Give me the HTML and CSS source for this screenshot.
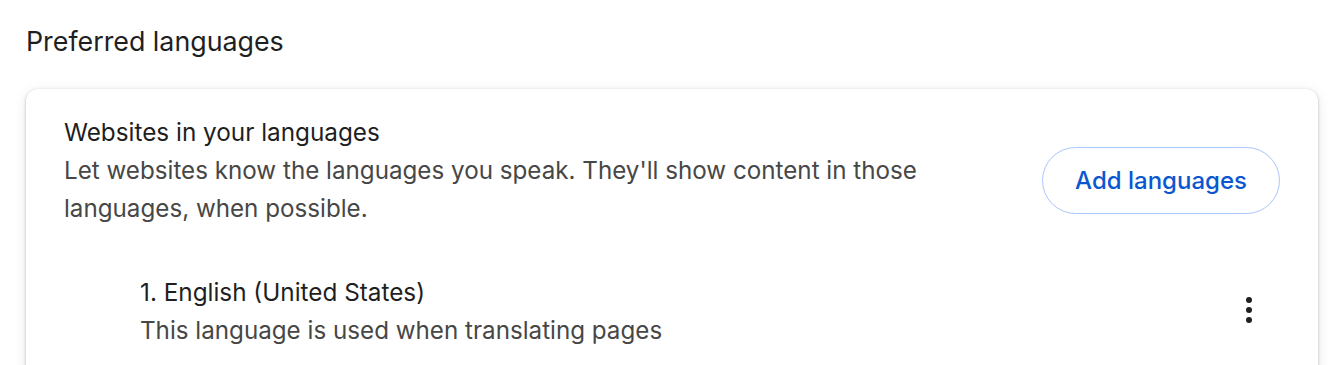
FILE: index.html
```html
<!DOCTYPE html>
<html lang="en">
<head>
    <meta charset="UTF-8">
    <title>Languages</title>
    <link rel="stylesheet" href="styles.css">
</head>
<body>
    <h2 class="section-title">Preferred languages</h2>

    <div class="card">
        <div class="row">
            <div class="row-text">
                <div class="row-label">Websites in your languages</div>
                <div class="row-sub">Let websites know the languages you speak. They'll show content in those languages, when possible.</div>
            </div>
            <button class="add-btn">Add languages</button>
        </div>

        <!-- Sprachliste -->
        <div class="lang-item">
            <div class="lang-text">
                <div class="lang-name">1. English (United States)</div>
                <div class="row-sub">This language is used when translating pages</div>
            </div>
            <button class="more-btn" aria-label="More actions">
                <svg width="24" height="26" viewBox="0 0 24 26">
                    <circle cx="12" cy="3" r="3"/>
                    <circle cx="12" cy="13" r="3"/>
                    <circle cx="12" cy="23" r="3"/>
                </svg>
            </button>
        </div>
    </div>
</body>
</html>
```

FILE: styles.css
```css
body {
    margin: 0;
    padding: 0 26px;
    background-color: #fff;
    font-family: Inter, "Noto Sans", sans-serif;
    color: #1f1f1f;
}
.section-title {
    margin: 0;
    padding-top: 22px;
    height: 89px;
    box-sizing: border-box;
    font-size: 26.8px;
    font-weight: 400;
    line-height: 38px;
}
.card {
    background-color: #fff;
    border-radius: 12px;
    box-shadow: 0 1px 3px rgba(0, 0, 0, 0.24), 0 2px 12px rgba(0, 0, 0, 0.1);
    padding: 24px 38px 40px;
    height: 400px;
}
.row {
    display: flex;
    align-items: center;
    justify-content: space-between;
}
.row-text {
    max-width: 900px;
}
.row-label, .lang-name {
    font-size: 24.3px;
    line-height: 38.5px;
}
.row-sub {
    font-size: 24.2px;
    line-height: 38.5px;
    color: #474747;
}
.add-btn {
    width: 238px;
    height: 67px;
    margin-top: 20px;
    border: 1.5px solid #a8c7fa;
    border-radius: 34px;
    background: #fff;
    color: #0b57d0;
    font-family: inherit;
    font-size: 24px;
    font-weight: 500;
    cursor: pointer;
}
.lang-item {
    display: flex;
    align-items: center;
    justify-content: space-between;
    margin-top: 44.5px;
    padding-left: 76px;
    padding-right: 19px;
}
.more-btn {
    border: none;
    background: none;
    padding: 0;
    width: 24px;
    height: 26px;
    margin-top: -3px;
}
.more-btn svg {
    fill: #1f1f1f;
}
```
